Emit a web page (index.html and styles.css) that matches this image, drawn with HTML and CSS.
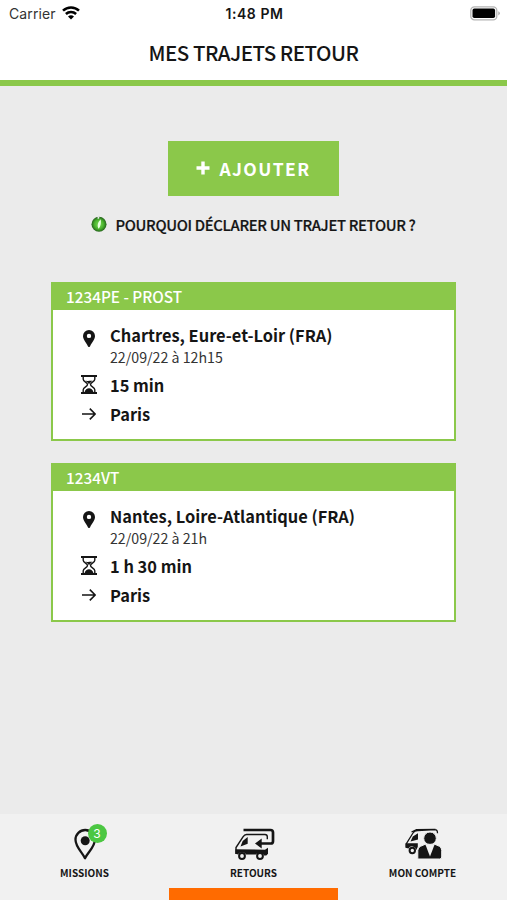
FILE: index.html
```
<!DOCTYPE html>
<html lang="fr">

<head>
  <meta charset="UTF-8">
  <meta name="viewport" content="width=device-width, initial-scale=1.0">
  <title>Mes trajets retour</title>
  <link rel="stylesheet" href="styles.css">
</head>

<body>
  <!-- shared icons -->
  <svg class="defs" width="0" height="0">
    <symbol id="pin" viewBox="0 0 12 17">
      <path fill-rule="evenodd" d="M6 0a6 6 0 0 1 6 6c0 3.600-3.100 6.300-4.900 10.200Q6 18 4.900 16.200C3.100 12.300 0 9.600 0 6a6 6 0 0 1 6-6zM6 3.700a2.200 2.200 0 1 0 0 4.400 2.200 2.200 0 0 0 0-4.400z"/>
    </symbol>
    <symbol id="hourglass" viewBox="0 0 16 19">
      <path d="M0 0h16v2H0zM0 17h16v2H0z"/>
      <path fill="none" stroke="currentColor" stroke-width="1.400" d="M2.200 2v2.200c0 2.600 4.300 3.200 4.300 5.300S2.200 12.200 2.200 14.800V17M13.800 2v2.200c0 2.600-4.300 3.200-4.300 5.300s4.300 2.700 4.300 5.300V17"/>
      <path d="M4.500 5.500c1.400.9 2.400.2 3.600.2s2.200.4 3.300-.3C10.700 6.900 8.500 7.700 8.200 9h-.5C7.400 7.600 5.200 6.900 4.500 5.500zM3.600 17c.3-2.200 2.600-3.700 4.400-3.700s4.100 1.500 4.400 3.700z"/>
    </symbol>
    <symbol id="arrow" viewBox="0 0 14 12">
      <path fill="none" stroke="currentColor" stroke-width="1.600" d="M0 6h13M7.800.6 13.200 6l-5.400 5.400"/>
    </symbol>
  </svg>

  <div class="status-bar">
    <div class="carrier">
      <span>Carrier</span>
      <svg width="18" height="14" viewBox="0 0 18 14">
        <g fill="none" stroke="#000" stroke-width="2.500">
          <path d="M1 4.700a11.500 11.500 0 0 1 16 0M3.900 8a7.300 7.300 0 0 1 10.200 0"/>
        </g>
        <path d="M9 13.500 6 10.600a4.300 4.300 0 0 1 6 0z"/>
      </svg>
    </div>
    <div class="time">1:48 PM</div>
    <svg class="battery" width="30" height="15" viewBox="0 0 30 15">
      <rect x=".8" y=".8" width="26" height="13" rx="3.600" fill="#fff" stroke="#b4b4b4" stroke-width="1.300"/>
      <rect x="2.500" y="2.600" width="22.600" height="9.400" rx="1.800"/>
      <path fill="#aaa" d="M28.300 5.200q1.500.5 1.500 2.100t-1.500 2.100z"/>
    </svg>
  </div>

  <header class="header">
    <h1>MES TRAJETS RETOUR</h1>
  </header>

  <main class="content">
    <button class="add">
      <svg width="14" height="14" viewBox="0 0 14 14"><path d="M7 .5v13M.5 7h13" stroke="#fff" stroke-width="3.400"/></svg>
      <span>AJOUTER</span>
    </button>

    <a class="why" href="#">
      <svg width="16" height="16" viewBox="0 0 16 16">
        <defs>
          <radialGradient id="glow">
            <stop offset="0" stop-color="#7bd957"/>
            <stop offset=".6" stop-color="#4bb52f"/>
            <stop offset="1" stop-color="#24631b"/>
          </radialGradient>
        </defs>
        <circle cx="8" cy="8.300" r="7.500" fill="url(#glow)"/>
        <path fill="#ebebeb" d="m6.500.4 2 .1-.4 2-1.400.5z"/>
        <path fill="#e8ffe0" d="M9.600 3.200c.9 3 .1 7-1.900 9.500-1.100-1.500-1.200-3.300-.8-4.800.3-1.700 1.500-3.200 2.700-4.700z"/>
      </svg>
      <span>POURQUOI DÉCLARER UN TRAJET RETOUR ?</span>
    </a>

    <section class="card">
      <h2>1234PE - PROST</h2>
      <div class="card-body">
        <div class="row place">
          <svg class="pin"><use href="#pin"/></svg>
          <div>
            <strong>Chartres, Eure-et-Loir (FRA)</strong>
            <p>22/09/22 à 12h15</p>
          </div>
        </div>
        <div class="row">
          <svg class="hourglass"><use href="#hourglass"/></svg>
          <strong>15 min</strong>
        </div>
        <div class="row">
          <svg class="arrow"><use href="#arrow"/></svg>
          <strong>Paris</strong>
        </div>
      </div>
    </section>

    <section class="card">
      <h2>1234VT</h2>
      <div class="card-body">
        <div class="row place">
          <svg class="pin"><use href="#pin"/></svg>
          <div>
            <strong>Nantes, Loire-Atlantique (FRA)</strong>
            <p>22/09/22 à 21h</p>
          </div>
        </div>
        <div class="row">
          <svg class="hourglass"><use href="#hourglass"/></svg>
          <strong>1 h 30 min</strong>
        </div>
        <div class="row">
          <svg class="arrow"><use href="#arrow"/></svg>
          <strong>Paris</strong>
        </div>
      </div>
    </section>
  </main>

  <nav class="tabs">
    <a class="tab" href="#">
      <div class="tab-icon">
        <svg width="40" height="34" viewBox="0 0 40 34">
          <path fill="none" stroke="#151515" stroke-width="2.300" stroke-linejoin="round" d="M20 31.200C17.500 25.500 10.500 20 10.500 12.700a9.700 9.700 0 0 1 19.400 0C29.900 20 22.500 25.500 20 31.200z"/>
          <circle cx="20.200" cy="13.700" r="4.500" fill="#151515"/>
        </svg>
        <span class="badge">3</span>
      </div>
      <span>MISSIONS</span>
    </a>
    <a class="tab active" href="#">
      <div class="tab-icon">
        <svg width="42" height="34" viewBox="0 0 42 34">
          <g fill="none" stroke="#151515">
            <path stroke-width="1.400" d="M3 27v-6.500l7-10.700Q11.500 7.500 13.500 7.500H32q2.300 0 2.300 2.200v2.500"/>
            <path stroke-width="2.700" d="M10.500 3H37.500q2.500 0 2.500 2.500v8.700q0 2.300-2.300 2.300H27"/>
          </g>
          <path d="M22 16.500l6.700-5v10zM7.500 19.500l2.200-5.500 5-4v6.700zM2.400 22.300l29.600.4 3-2v6l-1.700 1.800H31a4.600 4.600 0 0 0-7.900-1H13a4.600 4.600 0 0 0-7.900 0l-2.700-.7z"/>
          <g fill="#f1f1f1" stroke="#151515" stroke-width="2"><circle cx="9" cy="29" r="2.900"/><circle cx="27" cy="29" r="2.900"/></g>
        </svg>
      </div>
      <span>RETOURS</span>
    </a>
    <a class="tab" href="#">
      <div class="tab-icon">
        <svg width="40" height="34" viewBox="0 0 40 34">
          <path fill="none" stroke="#151515" stroke-width="1.300" d="M3.200 20.500V17L10 6Q11.500 3.700 14.500 3.700L32 2.700q2.500 0 2.500 3.500M8.500 5l5-2.300 19-.2"/>
          <path d="M7.500 14.500l2.300-5 5.200-3.300v6.300zM2.600 16.200h12.200v3.500l-1.500 3.300a4.200 4.200 0 0 0-7.800-1.500l-2.900-.8z"/>
          <circle cx="9.300" cy="23.500" r="2.700" fill="#f1f1f1" stroke="#151515" stroke-width="2"/>
          <g stroke="#f1f1f1" stroke-width="1">
            <circle cx="27" cy="11.300" r="6.300"/>
            <path d="M14.800 32V23.500q0-3 2.800-4.200l4.500-2h9.800l4.500 2q2.300 1.200 2.300 4.200v6.500q0 2-2 2z"/>
          </g>
          <path fill="#f1f1f1" d="M22.300 17.300h9.400L27 29.500z"/>
        </svg>
      </div>
      <span>MON COMPTE</span>
    </a>
  </nav>
</body>

</html>
```
FILE: styles.css
```
* {
  margin: 0;
  padding: 0;
  box-sizing: border-box;
}

body {
  display: flex;
  flex-direction: column;
  height: 900px;
  background-color: #ebebeb;
  color: #151515;
  font-family: "Noto Sans CJK SC", "Open Sans", sans-serif;
}

a {
  color: inherit;
  text-decoration: none;
}

svg {
  display: block;
  flex: none;
  fill: currentColor;
}

.defs {
  position: absolute;
}

/* status bar */
.status-bar {
  display: grid;
  grid-template-columns: 1fr auto 1fr;
  align-items: center;
  height: 26px;
  padding: 0 7px 0 9px;
  background-color: #fff;
  font-family: Inter, sans-serif;
  font-size: 14px;
}

.carrier {
  display: flex;
  align-items: center;
  gap: 6px;
  color: #333;
  letter-spacing: .1px;
}

.carrier svg {
  color: #000;
}

.time {
  font-size: 14px;
  font-weight: 600;
  letter-spacing: .55px;
}

.battery {
  justify-self: end;
  color: #000;
}

/* header */
.header {
  height: 60px;
  background-color: #fff;
  border-bottom: 6px solid #8bc84a;
  text-align: center;
}

.header h1 {
  font-size: 20.5px;
  font-weight: 500;
  letter-spacing: -.5px;
  line-height: 53px;
}

/* content */
.content {
  display: flex;
  flex: 1;
  flex-direction: column;
  align-items: center;
  padding-top: 55px;
}

.add {
  display: flex;
  align-items: center;
  justify-content: center;
  gap: 9px;
  width: 171px;
  height: 55px;
  padding-bottom: 1px;
  border: 0;
  background-color: #8bc84a;
  color: #fff;
  font-family: inherit;
  font-size: 17.5px;
  font-weight: 700;
  letter-spacing: 1.4px;
}

.why {
  display: flex;
  align-items: center;
  gap: 8px;
  height: 24px;
  margin: 16px 0 46px;
  font-size: 14.8px;
  font-weight: 500;
  letter-spacing: -.33px;
  -webkit-text-stroke: .2px #151515;
}

.card {
  width: 405px;
  height: 159px;
  margin-bottom: 22px;
  border: 2px solid #8bc84a;
  background-color: #fff;
}

.card h2 {
  height: 26px;
  padding-left: 13px;
  background-color: #8bc84a;
  color: #fff;
  font-size: 15.3px;
  font-weight: 500;
  line-height: 24px;
}

.card-body {
  padding: 11px 0 0 27px;
}

.row {
  display: grid;
  grid-template-columns: 17px 1fr;
  column-gap: 13px;
  align-items: center;
  justify-items: center;
  height: 29px;
}

.row > :last-child {
  justify-self: start;
}

.row strong {
  display: block;
  font-size: 16.4px;
  font-weight: 700;
  line-height: 28px;
}

.place {
  align-items: start;
  height: 49px;
}

.place p {
  color: #333;
  font-size: 14.2px;
  line-height: 16px;
}

.pin {
  width: 12px;
  height: 17px;
  margin-top: 9px;
}

.hourglass {
  width: 16px;
  height: 19px;
}

.arrow {
  width: 14px;
  height: 12px;
}

/* bottom tabs */
.tabs {
  display: grid;
  grid-template-columns: repeat(3, 1fr);
  height: 86px;
  background-color: #f1f1f1;
}

.tab {
  display: flex;
  flex-direction: column;
  align-items: center;
  padding-top: 13px;
  font-size: 10px;
  font-weight: 700;
  line-height: 20px;
}

.tab.active {
  border-bottom: 12px solid #ff6b00;
}

.tab-icon {
  position: relative;
  height: 36px;
}

.badge {
  position: absolute;
  top: -3px;
  left: 23px;
  width: 19px;
  height: 19px;
  border-radius: 50%;
  background-color: #4cc742;
  color: #fff;
  font-family: Inter, sans-serif;
  font-size: 12px;
  font-weight: 400;
  line-height: 19px;
  text-align: center;
}
```
